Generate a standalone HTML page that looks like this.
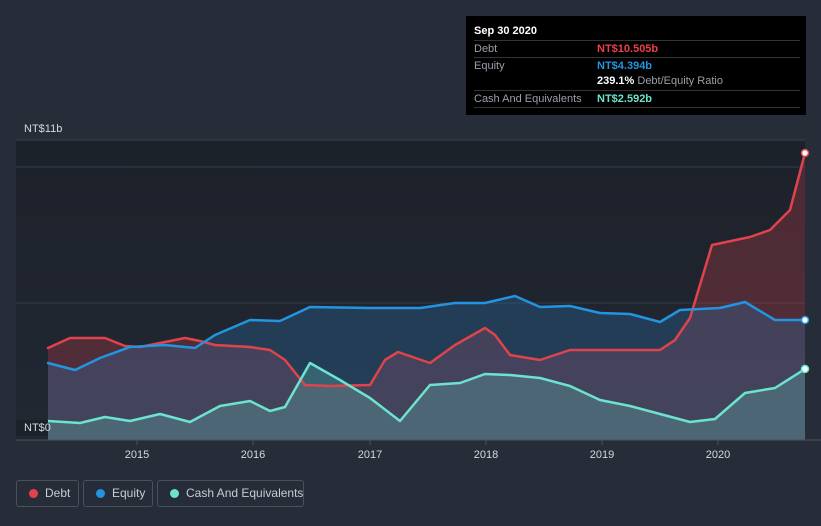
<!DOCTYPE html>
<html><head><meta charset="utf-8"><style>
body{margin:0;width:821px;height:526px;background:#262d38;font-family:"Liberation Sans",sans-serif;overflow:hidden;position:relative}
.tt{position:absolute;left:466px;top:16px;width:340px;height:99px;background:#000}
.tt .r{position:absolute;left:8px;width:326px;font-size:11px;color:#9aa0a8;height:16px;line-height:16px;white-space:nowrap}
.leg{position:absolute;top:480px;height:27px;border:1px solid #4a515c;border-radius:3px;box-sizing:border-box;color:#c9ccd1;font-size:12px;line-height:25px;white-space:nowrap}
.leg i{position:absolute;left:12px;top:8px;width:9px;height:9px;border-radius:50%}
</style></head><body>
<svg width="821" height="526" style="position:absolute;left:0;top:0">
<defs>
<linearGradient id="bg" x1="0" y1="0" x2="0" y2="1"><stop offset="0" stop-color="#1c212a"/><stop offset="1" stop-color="#222833"/></linearGradient>
</defs>
<rect x="16" y="140" width="789" height="300" fill="url(#bg)"/>
<line x1="16" y1="140" x2="805" y2="140" stroke="#3a414c"/>
<line x1="16" y1="167" x2="805" y2="167" stroke="#353c47"/>
<line x1="16" y1="303" x2="805" y2="303" stroke="#353c47"/>
<g stroke-linejoin="round" stroke-linecap="round">
<path d="M48,348 L70,338 105,338 125,346 140,347 185,338 200,341 215,345 250,347 270,350 285,360 305,385 330,386 370,385 385,360 398,352 430,363 455,345 485,328 495,335 510,355 540,360 570,350 600,350 660,350 675,340 690,318 712,245 750,237 770,230 790,210 805,153 L805,440 L48,440Z" fill="#c0404a" fill-opacity="0.3"/>
<path d="M48,363 L75,370 100,358 130,347 165,345 195,348 215,335 250,320 280,321 310,307 370,308 420,308 455,303 485,303 515,296 540,307 570,306 600,313 630,314 660,322 680,310 720,308 745,302 775,320 805,320 L805,440 L48,440Z" fill="#2f6aa0" fill-opacity="0.35"/>
<path d="M48,421 L80,423 105,417 130,421 160,414 190,422 220,406 250,401 270,411 285,407 310,363 340,380 370,398 400,421 430,385 460,383 485,374 510,375 540,378 570,386 600,400 630,406 660,414 690,422 715,419 745,393 775,388 805,369 L805,440 L48,440Z" fill="#5fb8b0" fill-opacity="0.3"/>
<path d="M48,348 L70,338 105,338 125,346 140,347 185,338 200,341 215,345 250,347 270,350 285,360 305,385 330,386 370,385 385,360 398,352 430,363 455,345 485,328 495,335 510,355 540,360 570,350 600,350 660,350 675,340 690,318 712,245 750,237 770,230 790,210 805,153" fill="none" stroke="#e0434b" stroke-width="2.5"/>
<path d="M48,363 L75,370 100,358 130,347 165,345 195,348 215,335 250,320 280,321 310,307 370,308 420,308 455,303 485,303 515,296 540,307 570,306 600,313 630,314 660,322 680,310 720,308 745,302 775,320 805,320" fill="none" stroke="#2394e0" stroke-width="2.5"/>
<path d="M48,421 L80,423 105,417 130,421 160,414 190,422 220,406 250,401 270,411 285,407 310,363 340,380 370,398 400,421 430,385 460,383 485,374 510,375 540,378 570,386 600,400 630,406 660,414 690,422 715,419 745,393 775,388 805,369" fill="none" stroke="#6be3d0" stroke-width="2.5"/>
</g>
<circle cx="805" cy="153" r="3.5" fill="#fff" stroke="#e0434b" stroke-width="1.5"/>
<circle cx="805" cy="320" r="3.5" fill="#fff" stroke="#2394e0" stroke-width="1.5"/>
<circle cx="805" cy="369" r="3.5" fill="#fff" stroke="#6be3d0" stroke-width="1.5"/>
<line x1="16" y1="440" x2="821" y2="440" stroke="#4a515c"/>
<g stroke="#4a515c"><line x1="137" y1="440" x2="137" y2="445"/><line x1="253" y1="440" x2="253" y2="445"/><line x1="370" y1="440" x2="370" y2="445"/><line x1="486" y1="440" x2="486" y2="445"/><line x1="602" y1="440" x2="602" y2="445"/><line x1="718" y1="440" x2="718" y2="445"/></g>
<g fill="#d5d8dc" font-size="11" text-anchor="middle" font-family="Liberation Sans"><text x="137" y="458">2015</text><text x="253" y="458">2016</text><text x="370" y="458">2017</text><text x="486" y="458">2018</text><text x="602" y="458">2019</text><text x="718" y="458">2020</text></g>
<text x="24" y="132" fill="#d5d8dc" font-size="11" font-family="Liberation Sans">NT$11b</text>
<rect x="16" y="420" width="32" height="16" fill="#1c212a"/>
<text x="24" y="431" fill="#d5d8dc" font-size="11" font-family="Liberation Sans">NT$0</text>
</svg>
<div class="tt">
<div class="r" style="top:7px;color:#fff;font-weight:bold">Sep 30 2020</div>
<div class="r" style="top:24px;border-top:1px solid #333">Debt<span style="position:absolute;left:123px;color:#e8414a;font-weight:bold">NT$10.505b</span></div>
<div class="r" style="top:41px;border-top:1px solid #333">Equity<span style="position:absolute;left:123px;color:#2394e0;font-weight:bold">NT$4.394b</span></div>
<div class="r" style="top:57px"><span style="position:absolute;left:123px"><b style="color:#fff">239.1%</b> Debt/Equity Ratio</span></div>
<div class="r" style="top:74px;border-top:1px solid #333;border-bottom:1px solid #333">Cash And Equivalents<span style="position:absolute;left:123px;color:#6be3d0;font-weight:bold">NT$2.592b</span></div>
</div>
<div class="leg" style="left:16px;width:63px"><i style="background:#e0434b"></i><span style="position:absolute;left:28px">Debt</span></div>
<div class="leg" style="left:83px;width:70px"><i style="background:#2394e0"></i><span style="position:absolute;left:28px">Equity</span></div>
<div class="leg" style="left:157px;width:147px"><i style="background:#6be3d0"></i><span style="position:absolute;left:28px">Cash And Equivalents</span></div>
</body></html>
